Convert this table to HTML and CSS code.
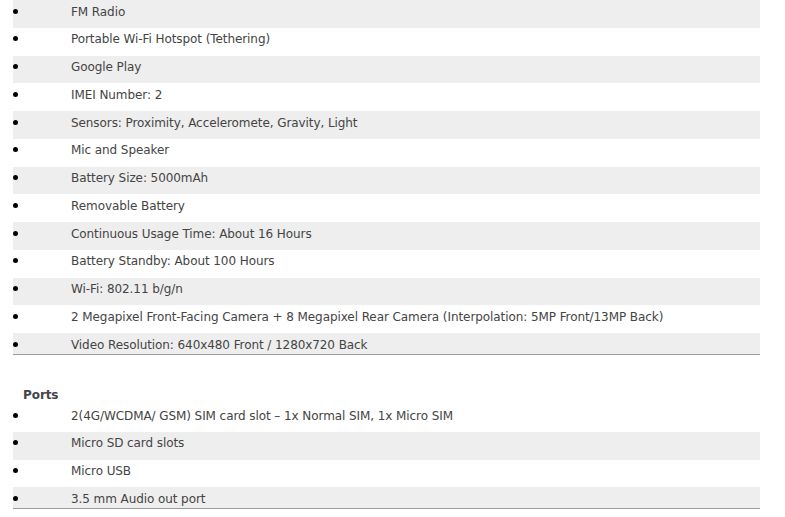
FILE: index.html
```html
<!DOCTYPE html>
<html>
<head>
<meta charset="utf-8">
<link rel="stylesheet" href="styles.css">
</head>
<body>
<div class="page">
  <ul class="specs">
    <li class="alt"><span class="dot"></span><span class="txt">FM Radio</span></li>
    <li><span class="dot"></span><span class="txt">Portable Wi-Fi Hotspot (Tethering)</span></li>
    <li class="alt"><span class="dot"></span><span class="txt">Google Play</span></li>
    <li><span class="dot"></span><span class="txt">IMEI Number: 2</span></li>
    <li class="alt"><span class="dot"></span><span class="txt">Sensors: Proximity, Acceleromete, Gravity, Light</span></li>
    <li><span class="dot"></span><span class="txt">Mic and Speaker</span></li>
    <li class="alt"><span class="dot"></span><span class="txt">Battery Size: 5000mAh</span></li>
    <li><span class="dot"></span><span class="txt">Removable Battery</span></li>
    <li class="alt"><span class="dot"></span><span class="txt">Continuous Usage Time: About 16 Hours</span></li>
    <li><span class="dot"></span><span class="txt">Battery Standby: About 100 Hours</span></li>
    <li class="alt"><span class="dot"></span><span class="txt">Wi-Fi: 802.11 b/g/n</span></li>
    <li><span class="dot"></span><span class="txt">2 Megapixel Front-Facing Camera + 8 Megapixel Rear Camera (Interpolation: 5MP Front/13MP Back)</span></li>
    <li class="alt last"><span class="dot"></span><span class="txt">Video Resolution: 640x480 Front / 1280x720 Back</span></li>
  </ul>
  <h3 class="heading">Ports</h3>
  <ul class="specs">
    <li><span class="dot"></span><span class="txt">2(4G/WCDMA/ GSM) SIM card slot – 1x Normal SIM, 1x Micro SIM</span></li>
    <li class="alt"><span class="dot"></span><span class="txt">Micro SD card slots</span></li>
    <li><span class="dot"></span><span class="txt">Micro USB</span></li>
    <li class="alt last"><span class="dot"></span><span class="txt">3.5 mm Audio out port</span></li>
  </ul>
</div>
</body>
</html>
```

FILE: styles.css
```css
html, body {
  margin: 0;
  padding: 0;
  background: #ffffff;
}

.page {
  width: 747px;
  margin-left: 13px;
  font-family: "DejaVu Sans", sans-serif;
  font-size: 12px;
  letter-spacing: -0.08px;
  color: #444444;
}

.specs {
  list-style: none;
  margin: 0;
  padding: 0;
  border-bottom: 1px solid #9c9c9c;
}

.specs li {
  display: flex;
  align-items: center;
  height: 21px;
  padding-bottom: 6.75px;
  background: #ffffff;
}

.specs li.alt {
  background: #eeeeee;
}

.specs li.last {
  padding-bottom: 0;
}

.dot {
  flex: none;
  width: 5px;
  height: 5px;
  margin: 1px 53px 0 0;
  border-radius: 50%;
  background: #000000;
}

.txt {
  white-space: nowrap;
  padding-top: 2px;
}

.heading {
  margin: 28px 0 0 10px;
  padding-top: 2px;
  height: 19px;
  line-height: 21px;
  font-size: 12px;
  font-weight: bold;
  color: #444444;
}
```
